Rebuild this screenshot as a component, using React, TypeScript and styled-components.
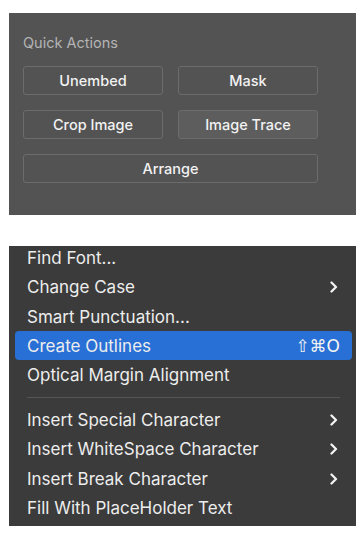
import React from 'react';
import styled, { createGlobalStyle } from 'styled-components';

const GlobalStyle = createGlobalStyle`
  html, body {
    margin: 0;
    padding: 0;
    background: #ffffff;
  }
  body {
    font-family: Inter, "Noto Sans", "DejaVu Sans", sans-serif;
    -webkit-font-smoothing: antialiased;
  }
`;

type MenuEntry =
  | { kind: 'item'; label: string; submenu?: boolean; shortcut?: string; active?: boolean }
  | { kind: 'separator' };

const actions = [
  { label: 'Unembed' },
  { label: 'Mask' },
  { label: 'Crop Image' },
  { label: 'Image Trace', hovered: true },
  { label: 'Arrange', wide: true },
];

const menu: MenuEntry[] = [
  { kind: 'item', label: 'Find Font...' },
  { kind: 'item', label: 'Change Case', submenu: true },
  { kind: 'item', label: 'Smart Punctuation...' },
  { kind: 'item', label: 'Create Outlines', shortcut: '⇧⌘O', active: true },
  { kind: 'item', label: 'Optical Margin Alignment' },
  { kind: 'separator' },
  { kind: 'item', label: 'Insert Special Character', submenu: true },
  { kind: 'item', label: 'Insert WhiteSpace Character', submenu: true },
  { kind: 'item', label: 'Insert Break Character', submenu: true },
  { kind: 'item', label: 'Fill With PlaceHolder Text' },
];

const Chevron = () => (
  <ChevronSvg viewBox="0 0 8 12" width="8" height="12">
    <polyline points="1.5,1.5 6,6 1.5,10.5" fill="none" stroke="#f2f2f2" strokeWidth="2.3" strokeLinecap="round" strokeLinejoin="round" />
  </ChevronSvg>
);

const App: React.FunctionComponent = () => {
  return (
    <Page>
      <GlobalStyle />
      <Panel>
        <PanelTitle>Quick Actions</PanelTitle>
        <ActionGrid>
          {actions.map((a) => (
            <ActionButton key={a.label} $wide={a.wide} $hovered={a.hovered}>
              {a.label}
            </ActionButton>
          ))}
        </ActionGrid>
      </Panel>

      <Menu>
        <MenuList>
          {menu.map((entry, i) =>
            entry.kind === 'separator' ? (
              <Separator key={`sep-${i}`} />
            ) : (
              <MenuItem key={entry.label} $active={entry.active}>
                <ItemLabel>{entry.label}</ItemLabel>
                {entry.shortcut && <Shortcut>{entry.shortcut}</Shortcut>}
                {entry.submenu && <Chevron />}
              </MenuItem>
            )
          )}
        </MenuList>
      </Menu>
    </Page>
  );
};

export default App;

const Page = styled.div`
  display: flex;
  flex-direction: column;
  gap: 31px;
  padding: 13px 8px 0 9px;
  width: 347px;
`;

const Panel = styled.section`
  background: #535353;
  height: 202px;
  box-sizing: border-box;
  padding: 21px 0 0 14px;
`;

const PanelTitle = styled.div`
  color: #b4b4b4;
  font-size: 14.5px;
  line-height: 18px;
  height: 18px;
  margin-bottom: 14px;
`;

const ActionGrid = styled.div`
  display: grid;
  grid-template-columns: 140px 140px;
  column-gap: 15px;
  row-gap: 15px;
`;

const ActionButton = styled.div<{ $wide?: boolean; $hovered?: boolean }>`
  grid-column: ${(p) => (p.$wide ? '1 / span 2' : 'auto')};
  height: 29px;
  box-sizing: border-box;
  border: 1px solid #6c6c6c;
  border-radius: 3px;
  background: ${(p) => (p.$hovered ? '#5d5d5d' : '#535353')};
  color: #f2f2f2;
  font-size: 14.5px;
  font-weight: 500;
  display: flex;
  align-items: center;
  justify-content: center;
`;

const Menu = styled.nav`
  background: #3b3b3b;
  height: 280px;
  overflow: hidden;
`;

const MenuList = styled.div`
  display: flex;
  flex-direction: column;
  margin-top: -2.6px;
  padding: 0 4px 0 6px;
`;

const MenuItem = styled.div<{ $active?: boolean }>`
  height: 29.25px;
  display: flex;
  align-items: center;
  padding: 0 12px;
  border-radius: 4px;
  background: ${(p) => (p.$active ? '#2870d6' : 'transparent')};
  color: #ededed;
  font-size: 17px;
`;

const ItemLabel = styled.span`
  flex: 1;
  white-space: nowrap;
`;

const Shortcut = styled.span`
  font-family: "DejaVu Sans", sans-serif;
  font-size: 17px;
  color: #f2f2f2;
`;

const ChevronSvg = styled.svg`
  margin-right: 2px;
`;

const Separator = styled.div`
  height: 1px;
  background: #565656;
  margin: 7px 12px 7.8px 12px;
`;
